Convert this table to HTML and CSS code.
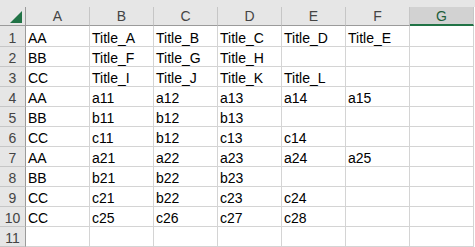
FILE: index.html
```html
<!DOCTYPE html>
<html>
<head>
<meta charset="utf-8">
<link rel="stylesheet" href="styles.css">
</head>
<body>
<div class="band"></div>
<div class="sheet">
  <div class="corner"><svg class="tri" width="12" height="12" viewBox="0 0 12 12"><polygon points="12,0 12,12 0,12" fill="#217346"/></svg></div>
  <div class="ch">A</div><div class="ch">B</div><div class="ch">C</div><div class="ch">D</div><div class="ch">E</div><div class="ch">F</div><div class="ch sel">G</div>

  <div class="rh first">1</div><div class="c first">AA</div><div class="c first">Title_A</div><div class="c first">Title_B</div><div class="c first">Title_C</div><div class="c first">Title_D</div><div class="c first">Title_E</div><div class="c first"></div>
  <div class="rh">2</div><div class="c">BB</div><div class="c">Title_F</div><div class="c">Title_G</div><div class="c">Title_H</div><div class="c"></div><div class="c"></div><div class="c"></div>
  <div class="rh">3</div><div class="c">CC</div><div class="c">Title_I</div><div class="c">Title_J</div><div class="c">Title_K</div><div class="c">Title_L</div><div class="c"></div><div class="c"></div>
  <div class="rh">4</div><div class="c">AA</div><div class="c">a11</div><div class="c">a12</div><div class="c">a13</div><div class="c">a14</div><div class="c">a15</div><div class="c"></div>
  <div class="rh">5</div><div class="c">BB</div><div class="c">b11</div><div class="c">b12</div><div class="c">b13</div><div class="c"></div><div class="c"></div><div class="c"></div>
  <div class="rh">6</div><div class="c">CC</div><div class="c">c11</div><div class="c">b12</div><div class="c">c13</div><div class="c">c14</div><div class="c"></div><div class="c"></div>
  <div class="rh">7</div><div class="c">AA</div><div class="c">a21</div><div class="c">a22</div><div class="c">a23</div><div class="c">a24</div><div class="c">a25</div><div class="c"></div>
  <div class="rh">8</div><div class="c">BB</div><div class="c">b21</div><div class="c">b22</div><div class="c">b23</div><div class="c"></div><div class="c"></div><div class="c"></div>
  <div class="rh">9</div><div class="c">CC</div><div class="c">c21</div><div class="c">b22</div><div class="c">c23</div><div class="c">c24</div><div class="c"></div><div class="c"></div>
  <div class="rh">10</div><div class="c">CC</div><div class="c">c25</div><div class="c">c26</div><div class="c">c27</div><div class="c">c28</div><div class="c"></div><div class="c"></div>
  <div class="rh">11</div><div class="c"></div><div class="c"></div><div class="c"></div><div class="c"></div><div class="c"></div><div class="c"></div><div class="c"></div>
</div>
</body>
</html>
```
FILE: styles.css
```css
* { box-sizing: border-box; }
html, body { margin: 0; padding: 0; background: #ffffff; }
body {
  font-family: "Liberation Sans", Arial, sans-serif;
  font-size: 14px;
  color: #000;
  width: 475px;
  height: 247px;
  overflow: hidden;
}
.band { height: 7px; background: #e6e6e6; }
.sheet {
  display: grid;
  grid-template-columns: 26px repeat(7, 64px);
  grid-template-rows: 19px 21px repeat(10, 20px);
}
.corner {
  background: #e6e6e6;
  border-right: 1px solid #9b9b9b;
  border-bottom: 1px solid #9b9b9b;
  display: flex;
  align-items: flex-end;
  justify-content: flex-end;
  padding: 0 3px 2px 0;
}
.tri { display: block; }
.ch {
  background: #e6e6e6;
  border-right: 1px solid #c6c6c6;
  border-bottom: 1px solid #9b9b9b;
  color: #444;
  font-size: 14px;
  line-height: 16px;
  display: flex;
  align-items: flex-end;
  justify-content: center;
  padding-bottom: 1px;
}
.ch.sel {
  background: #d2d2d2;
  border-bottom: 2px solid #217346;
  color: #1e5e3b;
  padding-bottom: 0;
}
.rh {
  background: #e6e6e6;
  border-right: 1px solid #9b9b9b;
  border-bottom: 1px solid #c6c6c6;
  color: #444;
  line-height: 16px;
  display: flex;
  align-items: flex-end;
  justify-content: center;
}
.c {
  border-right: 1px solid #d4d4d4;
  border-bottom: 1px solid #d4d4d4;
  line-height: 16px;
  padding-left: 2px;
  display: flex;
  align-items: flex-end;
  white-space: nowrap;
}
```
